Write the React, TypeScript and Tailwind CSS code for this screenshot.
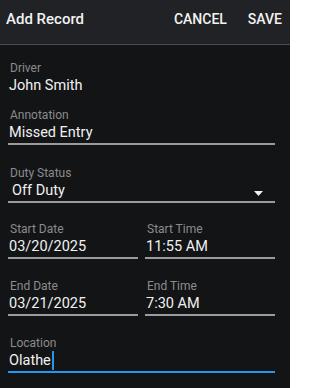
import React from "react";

const font = { fontFamily: "Roboto, 'Liberation Sans', sans-serif" };

interface FieldProps {
  label: string;
  value: string;
  underline?: boolean;
  active?: boolean;
  select?: boolean;
}

const Field: React.FC<FieldProps> = ({ label, value, underline = true, active, select }) => {
  return (
    <div className="flex flex-col">
      <span className="text-[12px] leading-[14px] text-[#8b8c8e] pl-[2px]">{label}</span>
      <div
        className={`flex items-center h-[21px] text-[14.5px] leading-[21px] text-[#f1f1f1] ${
          select ? "pl-[4px] pr-[12px]" : "pl-[1px]"
        }`}
      >
        <span>{value}</span>
        {active && <span className="inline-block w-[2px] h-[19px] bg-[#2196f3] ml-[1px]" />}
        {select && (
          <svg className="ml-auto mt-[5px]" width="9" height="5" viewBox="0 0 9 5">
            <path d="M0 0h9L4.5 5z" fill="#f2f2f2" />
          </svg>
        )}
      </div>
      {underline && (
        <div className={active ? "h-[2px] bg-[#2196f3]" : "h-[2px] bg-[#9a9b9d]"} />
      )}
    </div>
  );
};

export default function App() {
  return (
    <div className="w-[290px] h-[388px] bg-[#131416] overflow-hidden" style={font}>
      <div className="h-[45px] bg-[#202225] border-b border-[#4a4c50] flex items-start pt-[9px] pl-[6px] pr-[8px]">
        <span className="text-[15px] leading-[20px] font-medium text-[#f2f2f2]">Add Record</span>
        <div className="ml-auto flex gap-[21px]">
          <span className="text-[14px] leading-[20px] font-medium text-[#f2f2f2]">CANCEL</span>
          <span className="text-[14px] leading-[20px] font-medium text-[#f2f2f2]">SAVE</span>
        </div>
      </div>
      <div className="flex flex-col pl-[8px] pr-[15px] pt-[16px]">
        <Field label="Driver" value="John Smith" underline={false} />
        <div className="mt-[12px]">
          <Field label="Annotation" value="Missed Entry" />
        </div>
        <div className="mt-[21px]">
          <Field label="Duty Status" value="Off Duty" select />
        </div>
        <div className="mt-[19px] grid grid-cols-2 gap-x-[7px]">
          <Field label="Start Date" value="03/20/2025" />
          <Field label="Start Time" value="11:55 AM" />
        </div>
        <div className="mt-[20px] grid grid-cols-2 gap-x-[7px]">
          <Field label="End Date" value="03/21/2025" />
          <Field label="End Time" value="7:30 AM" />
        </div>
        <div className="mt-[20px]">
          <Field label="Location" value="Olathe" active />
        </div>
      </div>
    </div>
  );
}
